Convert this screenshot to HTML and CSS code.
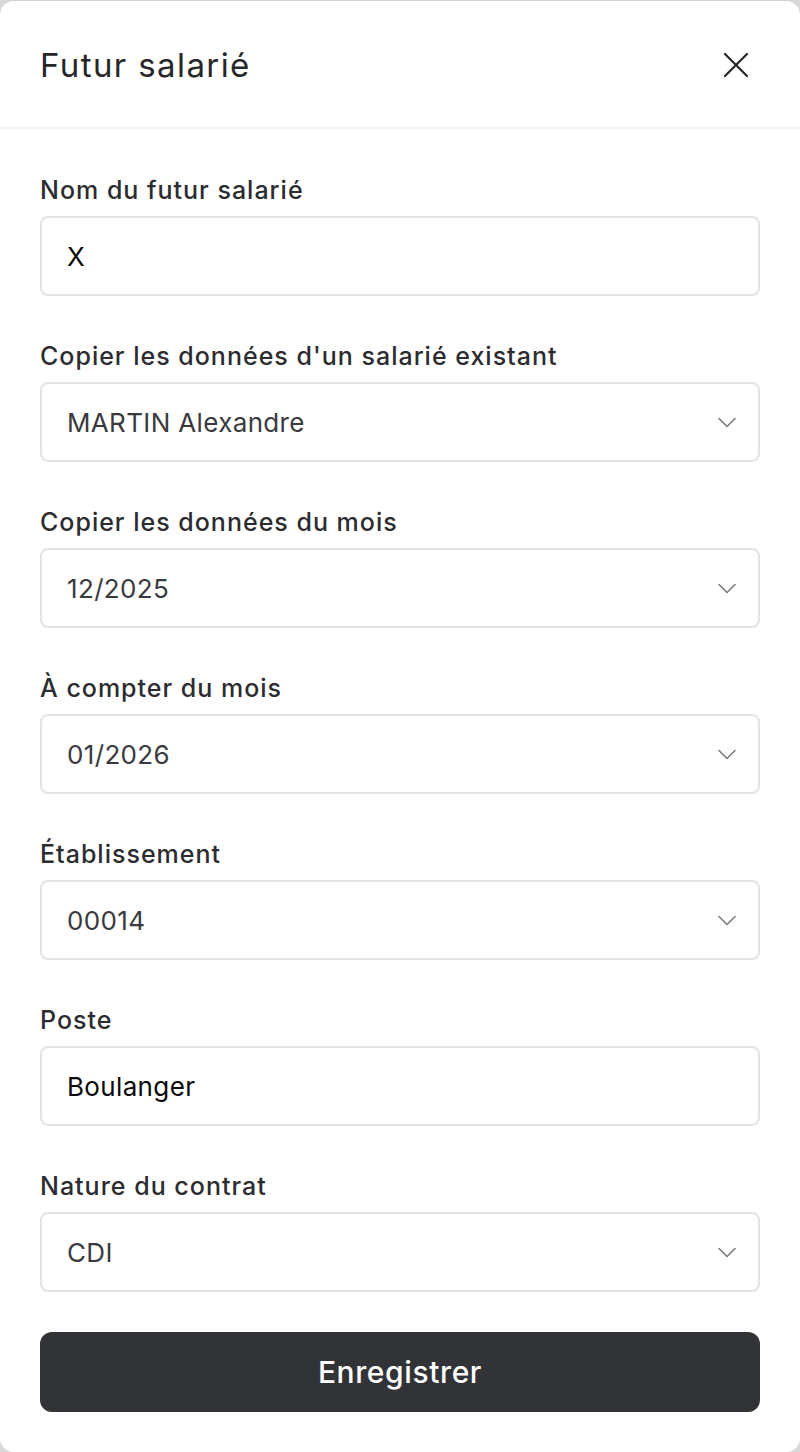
FILE: index.html
```html
<!DOCTYPE html>
<html lang="fr">
<head>
<meta charset="utf-8">
<title>Futur salarié</title>
<link rel="stylesheet" href="styles.css">
</head>
<body>
<div class="panel">
  <header class="header">
    <h1 class="title">Futur salarié</h1>
    <button class="close" aria-label="Fermer">
      <svg width="26" height="26" viewBox="0 0 26 26" fill="none" stroke="currentColor" stroke-width="2.2" stroke-linecap="round"><path d="M2 2L24 24M24 2L2 24"/></svg>
    </button>
  </header>
  <form class="form">
    <div class="field">
      <label class="label">Nom du futur salarié</label>
      <div class="control input-like"><span class="value strong">X</span></div>
    </div>
    <div class="field">
      <label class="label">Copier les données d'un salarié existant</label>
      <div class="control select"><span class="value">MARTIN Alexandre</span><svg class="chev" width="20" height="11" viewBox="0 0 20 11" fill="none" stroke="currentColor" stroke-width="1.6" stroke-linecap="round" stroke-linejoin="round"><path d="M2 1.5L10 9.5L18 1.5"/></svg></div>
    </div>
    <div class="field">
      <label class="label">Copier les données du mois</label>
      <div class="control select"><span class="value">12/2025</span><svg class="chev" width="20" height="11" viewBox="0 0 20 11" fill="none" stroke="currentColor" stroke-width="1.6" stroke-linecap="round" stroke-linejoin="round"><path d="M2 1.5L10 9.5L18 1.5"/></svg></div>
    </div>
    <div class="field">
      <label class="label">À compter du mois</label>
      <div class="control select"><span class="value">01/2026</span><svg class="chev" width="20" height="11" viewBox="0 0 20 11" fill="none" stroke="currentColor" stroke-width="1.6" stroke-linecap="round" stroke-linejoin="round"><path d="M2 1.5L10 9.5L18 1.5"/></svg></div>
    </div>
    <div class="field">
      <label class="label">Établissement</label>
      <div class="control select"><span class="value">00014</span><svg class="chev" width="20" height="11" viewBox="0 0 20 11" fill="none" stroke="currentColor" stroke-width="1.6" stroke-linecap="round" stroke-linejoin="round"><path d="M2 1.5L10 9.5L18 1.5"/></svg></div>
    </div>
    <div class="field">
      <label class="label">Poste</label>
      <div class="control input-like"><span class="value strong">Boulanger</span></div>
    </div>
    <div class="field">
      <label class="label">Nature du contrat</label>
      <div class="control select"><span class="value">CDI</span><svg class="chev" width="20" height="11" viewBox="0 0 20 11" fill="none" stroke="currentColor" stroke-width="1.6" stroke-linecap="round" stroke-linejoin="round"><path d="M2 1.5L10 9.5L18 1.5"/></svg></div>
    </div>
    <button type="button" class="submit">Enregistrer</button>
  </form>
</div>
</body>
</html>
```
FILE: styles.css
```css
* { box-sizing: border-box; }
html, body { margin: 0; padding: 0; }
body {
  background: #d9d9dc;
  font-family: Inter, "Noto Sans", "Liberation Sans", sans-serif;
  width: 800px;
  height: 1452px;
  overflow: hidden;
}
.panel {
  background: #ffffff;
  height: 1452px;
  border-radius: 14px;
  border-top: 1px solid #d4d4d8;
}
.header {
  height: 128px;
  display: flex;
  align-items: center;
  justify-content: space-between;
  padding: 2px 51px 0 40px;
  border-bottom: 2px solid #f2f2f3;
}
.title {
  margin: 0;
  font-size: 33px;
  font-weight: 400;
  color: #27272a;
  letter-spacing: 1.4px;
}
.close {
  border: 0;
  background: none;
  padding: 0;
  color: #27272a;
  display: flex;
  width: 26px;
  height: 26px;
}
.form {
  padding: 45px 40px 0;
  display: flex;
  flex-direction: column;
  gap: 44px;
}
.field {
  display: flex;
  flex-direction: column;
  gap: 10px;
}
.label {
  font-size: 25px;
  line-height: 32px;
  font-weight: 450;
  color: #2c2c30;
  letter-spacing: 1px;
}
.control {
  height: 80px;
  border: 2px solid #e4e4e7;
  border-radius: 8px;
  display: flex;
  align-items: center;
  justify-content: space-between;
  padding: 0 21px 0 25px;
}
.value {
  font-size: 26px;
  color: #3a3a3e;
  letter-spacing: 0.35px;
}
.value.strong { color: #0a0a0a; }
.chev { color: #7a7a80; display: block; }
.submit {
  margin-top: -4px;
  height: 80px;
  border: 0;
  border-radius: 12px;
  background: #323337;
  color: #ffffff;
  font-family: inherit;
  font-size: 30px;
  font-weight: 500;
  letter-spacing: 0.6px;
}
```
